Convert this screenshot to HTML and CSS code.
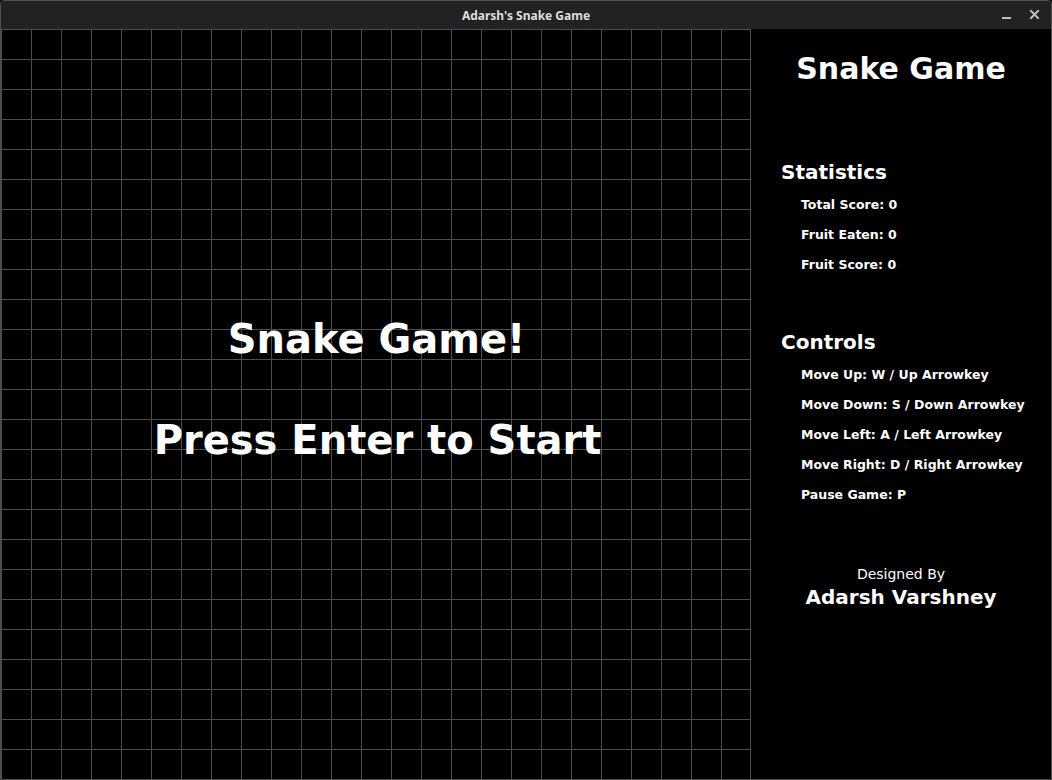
FILE: index.html
```html
<!DOCTYPE html>
<html lang="en">
<head>
<meta charset="utf-8">
<title>Adarsh's Snake Game</title>
<link rel="stylesheet" href="styles.css">
</head>
<body>
<div class="window">
  <header class="titlebar">
    <div class="title">Adarsh's Snake Game</div>
    <div class="controls">
      <span class="wbtn">
        <svg width="16" height="16" viewBox="0 0 16 16"><rect x="3" y="10" width="9" height="2" fill="#bdbdbd"/></svg>
      </span>
      <span class="wbtn">
        <svg width="16" height="16" viewBox="0 0 16 16"><path d="M4 4 L11 11 M11 4 L4 11" stroke="#bdbdbd" stroke-width="2" stroke-linecap="square"/></svg>
      </span>
    </div>
  </header>
  <main class="content">
    <section class="board">
      <div class="board-title">Snake Game!</div>
      <div class="board-sub">Press Enter to Start</div>
    </section>
    <aside class="sidebar">
      <h1 class="side-title">Snake Game</h1>
      <h2 class="section-head stats-head">Statistics</h2>
      <ul class="items">
        <li>Total Score: 0</li>
        <li>Fruit Eaten: 0</li>
        <li>Fruit Score: 0</li>
      </ul>
      <h2 class="section-head controls-head">Controls</h2>
      <ul class="items">
        <li>Move Up: W / Up Arrowkey</li>
        <li>Move Down: S / Down Arrowkey</li>
        <li>Move Left: A / Left Arrowkey</li>
        <li>Move Right: D / Right Arrowkey</li>
        <li>Pause Game: P</li>
      </ul>
      <div class="credit-label">Designed By</div>
      <div class="credit-name">Adarsh Varshney</div>
    </aside>
  </main>
</div>
</body>
</html>
```
FILE: styles.css
```css
* { box-sizing: border-box; }
html, body { margin: 0; padding: 0; background: #000; }
body { width: 1052px; height: 780px; overflow: hidden; }

.window {
  width: 1052px;
  height: 780px;
  border: 1px solid #505050;
  border-radius: 4px 4px 0 0;
  background: #000;
  display: flex;
  flex-direction: column;
  overflow: hidden;
}

.titlebar {
  height: 28px;
  flex: 0 0 28px;
  background: #222222;
  position: relative;
  display: flex;
  align-items: center;
  justify-content: center;
}
.title {
  font-family: "Noto Sans", "DejaVu Sans", sans-serif;
  font-weight: 700;
  font-size: 12px;
  color: #dedede;
  letter-spacing: 0;
}
.controls {
  position: absolute;
  right: 6px;
  top: 6px;
  display: flex;
  gap: 8px;
}
.wbtn { width: 20px; height: 16px; display: flex; align-items: center; justify-content: center; }
.wbtn svg { display: block; }

.content {
  display: flex;
  flex: 1;
  font-family: "DejaVu Sans", sans-serif;
  font-weight: 700;
  color: #fff;
}

.board {
  width: 750px;
  height: 750px;
  flex: 0 0 750px;
  background-color: #000;
  background-image:
    linear-gradient(to right, #4d4d4d 1px, transparent 1px),
    linear-gradient(to bottom, #4d4d4d 1px, transparent 1px);
  background-size: 30px 30px;
  border-right: 1px solid #4d4d4d;
  padding: 285px 0 0 2px;
  text-align: center;
}
.board-title, .board-sub {
  font-size: 40px;
  line-height: 50px;
}
.board-sub { margin-top: 51px; padding-left: 2px; }

.sidebar {
  width: 300px;
  flex: 0 0 300px;
  padding: 20px 0 0 30px;
  margin: 0;
}
.side-title {
  margin: 0 0 0 -30px;
  font-size: 30px;
  line-height: 40px;
  text-align: center;
  font-weight: 700;
}
.section-head {
  margin: 0;
  font-size: 20px;
  line-height: 30px;
  font-weight: 700;
}
.stats-head { margin-top: 68px; }
.controls-head { margin-top: 47px; }
.items {
  list-style: none;
  margin: 3px 0 0 0;
  padding: 0 0 0 20px;
}
.items li {
  font-size: 12.5px;
  line-height: 30px;
}
.credit-label {
  margin: 56px 0 0 -30px;
  font-size: 14px;
  font-weight: 400;
  line-height: 16px;
  text-align: center;
}
.credit-name {
  margin-left: -30px;
  font-size: 20px;
  line-height: 30px;
  text-align: center;
}
```
